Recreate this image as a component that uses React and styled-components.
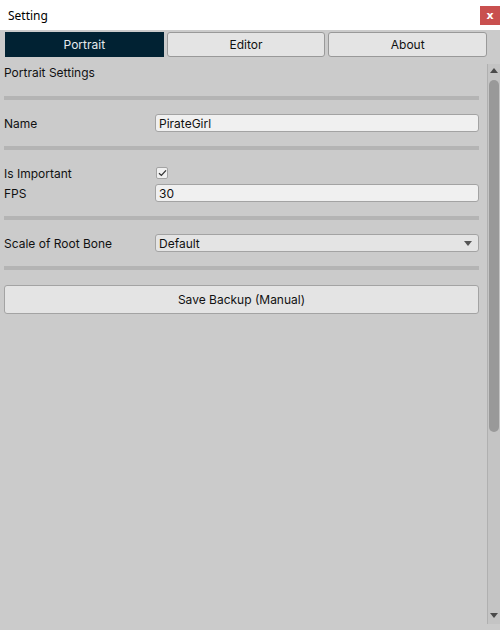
import React from "react";
import styled, { createGlobalStyle } from "styled-components";

const Global = createGlobalStyle`
  html, body { margin: 0; padding: 0; }
  body {
    width: 500px;
    height: 630px;
    overflow: hidden;
    background: #cbcbcb;
    font-family: Inter, "Noto Sans", sans-serif;
    font-size: 12px;
    color: #111;
  }
`;

const Window = styled.div`
  width: 500px;
  height: 630px;
  display: flex;
  flex-direction: column;
  background: #cbcbcb;
`;

const TitleBar = styled.div`
  height: 30px;
  background: #fff;
  display: flex;
  align-items: center;
  justify-content: space-between;
  padding-left: 8px;
  box-sizing: border-box;
  font-family: "Noto Sans", sans-serif;
  font-size: 12px;
  color: #000;
`;

const CloseButton = styled.div`
  width: 20px;
  height: 19px;
  background: #c9504f;
  color: #fff;
  display: flex;
  align-items: center;
  justify-content: center;
  font-size: 11px;
  font-weight: bold;
  font-family: "DejaVu Sans", sans-serif;
  margin-top: 1px;
`;

const Tabs = styled.div`
  display: flex;
  gap: 3px;
  padding: 2px 13px 0 5px;
`;

const Tab = styled.div`
  flex: 1;
  height: 25px;
  box-sizing: border-box;
  display: flex;
  align-items: center;
  justify-content: center;
  border-radius: ${(p) => (p.$active ? "0" : "3px")};
  background: ${(p) => (p.$active ? "#012233" : "#e4e4e4")};
  color: ${(p) => (p.$active ? "#e6eaee" : "#111")};
  border: 1px solid ${(p) => (p.$active ? "#012233" : "#999")};
  font-size: 12px;
`;

const Body = styled.div`
  flex: 1;
  display: flex;
  margin-top: 7px;
  padding-bottom: 6px;
  min-height: 0;
`;

const Content = styled.div`
  flex: 1;
  padding: 0 8px 0 4px;
  display: flex;
  flex-direction: column;
`;

const Heading = styled.div`
  height: 18px;
  line-height: 18px;
`;

const Separator = styled.div`
  height: 4px;
  background: #b4b4b4;
  margin-top: 14px;
`;

const Row = styled.div`
  display: flex;
  align-items: center;
  height: 18px;
  margin-top: ${(p) => p.$top ?? 0}px;
`;

const Label = styled.div`
  width: 151px;
  flex-shrink: 0;
`;

const TextField = styled.div`
  flex: 1;
  height: 18px;
  box-sizing: border-box;
  background: #f0f0f0;
  border: 1px solid #a3a3a3;
  border-radius: 3px;
  padding-left: 3px;
  display: flex;
  align-items: center;
`;

const CheckBox = styled.div`
  width: 12px;
  height: 12px;
  margin-left: 1px;
  box-sizing: border-box;
  background: #f0f0f0;
  border: 1px solid #a3a3a3;
  border-radius: 2px;
  display: flex;
  align-items: center;
  justify-content: center;
`;

const Dropdown = styled(TextField)`
  background: #e4e4e4;
  justify-content: space-between;
  padding-right: 6px;
`;

const DropArrow = styled.div`
  width: 0;
  height: 0;
  border-left: 4px solid transparent;
  border-right: 4px solid transparent;
  border-top: 5px solid #555;
`;

const Button = styled.div`
  margin-top: 15px;
  height: 29px;
  box-sizing: border-box;
  background: #e4e4e4;
  border: 1px solid #a3a3a3;
  border-radius: 3px;
  display: flex;
  align-items: center;
  justify-content: center;
`;

const ScrollBar = styled.div`
  width: 13px;
  background: #c4c4c4;
  border-left: 1px solid #b0b0b0;
  box-sizing: border-box;
  display: flex;
  flex-direction: column;
  align-items: center;
`;

const Arrow = styled.div`
  width: 0;
  height: 0;
  border-left: 4px solid transparent;
  border-right: 4px solid transparent;
  ${(p) =>
    p.$down
      ? "border-top: 5px solid #4a4a4a;"
      : "border-bottom: 5px solid #4a4a4a;"}
  margin: ${(p) => (p.$down ? "auto 0 6px" : "4px 0 0")};
`;

const Thumb = styled.div`
  width: 10px;
  height: 352px;
  margin-top: 7px;
  background: #999;
  border-radius: 5px;
`;

const Check = () => (
  <svg width="9" height="8" viewBox="0 0 9 8">
    <path d="M1 4.2 L3.4 6.4 L8 1.4" fill="none" stroke="#333" strokeWidth="1.3" />
  </svg>
);

export default function App() {
  return (
    <>
      <Global />
      <Window>
        <TitleBar>
          Setting
          <CloseButton>x</CloseButton>
        </TitleBar>
        <Tabs>
          <Tab $active>Portrait</Tab>
          <Tab>Editor</Tab>
          <Tab>About</Tab>
        </Tabs>
        <Body>
          <Content>
            <Heading>Portrait Settings</Heading>
            <Separator />
            <Row $top={14}>
              <Label>Name</Label>
              <TextField>PirateGirl</TextField>
            </Row>
            <Separator />
            <Row $top={14}>
              <Label>Is Important</Label>
              <CheckBox>
                <Check />
              </CheckBox>
            </Row>
            <Row $top={2}>
              <Label>FPS</Label>
              <TextField>30</TextField>
            </Row>
            <Separator />
            <Row $top={14}>
              <Label>Scale of Root Bone</Label>
              <Dropdown>
                Default
                <DropArrow />
              </Dropdown>
            </Row>
            <Separator />
            <Button>Save Backup (Manual)</Button>
          </Content>
          <ScrollBar>
            <Arrow />
            <Thumb />
            <Arrow $down />
          </ScrollBar>
        </Body>
      </Window>
    </>
  );
}
